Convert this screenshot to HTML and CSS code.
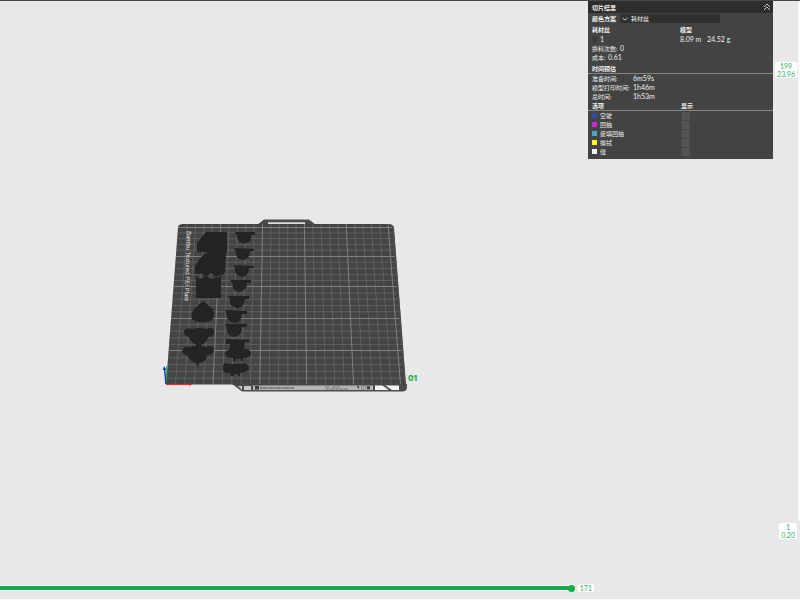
FILE: index.html
```html
<!DOCTYPE html>
<html lang="zh-CN">
<head>
<meta charset="utf-8">
<title>切片预览</title>
<link rel="stylesheet" href="styles.css">
</head>
<body>
<main class="viewport">
  <svg class="scene" viewBox="160 215 265 180" role="img" aria-label="打印板 01">
    <defs>
      <clipPath id="plate-clip"><path d="M183 224H389Q393 224 394 228L406 384H166L178 228Q178 224 183 224Z"/></clipPath>
    </defs>
    <path d="M257 225L264 219.5H309L316 225Z" fill="#4b4d4c"/>
    <path d="M268 222.3H305V224H268Z" fill="#dedede"/>
    <path d="M232 384H407V387Q407 391.5 402 391.5H242Z" fill="#4b4d4c"/>
    <path d="M238 386H242V390Z M244 386H251V390H244Z" fill="#c8c8c8"/>
    <path d="M253 385.5H373V390H253Z" fill="#b4b5b5"/>
    <path d="M375 385.5H399V390H375Z" fill="#f4f4f4"/>
    <path d="M382 384L391 390.5" stroke="#4b4d4c" stroke-width="1.8"/>
    <path d="M255 386H259V389.5H255Z M357 386.2H359.5L358.2 389.3Z M367 386.2H370V389.3H367Z" fill="#3b3d3c"/>
    <path d="M361.5 386.5H365.5V389.3H361.5Z" fill="none" stroke="#666" stroke-width=".5"/>
    <path d="M260 388H294" stroke="#666" stroke-width="1.3" stroke-dasharray="2 .5 3 .4 1 .5"/>
    <path d="M325 387H330M332 387H340M326 389H348" stroke="#666" stroke-width=".9" stroke-dasharray="2 .5"/>
    <path d="M183 224H389Q393 224 394 228L406 384.5H166L178 228Q178 224 183 224Z" fill="#434544"/>
    <g clip-path="url(#plate-clip)" fill="none">
      <path stroke="#646665" stroke-width=".8" d="M187.4 224L175.4 385M195.7 224L184.8 385M204.1 224L194.1 385M212.4 224L203.5 385M229.2 224L222.3 385M237.5 224L231.7 385M245.9 224L241 385M254.2 224L250.4 385M271 224L269.2 385M279.3 224L278.6 385M287.7 224L287.9 385M296 224L297.3 385M312.8 224L316.1 385M321.1 224L325.5 385M329.5 224L334.8 385M337.8 224L344.2 385M354.6 224L363 385M362.9 224L372.4 385M371.3 224L381.7 385M379.6 224L391.1 385"/>
      <path stroke="#646665" stroke-width=".8" d="M166 378.2H406M166 371.4H406M166 364.6H406M166 357.8H406M166 344.4H406M166 337.8H406M166 331.2H406M166 324.6H406M166 311.8H406M166 305.5H406M166 299.2H406M166 293H406M166 280.6H406M166 274.4H406M166 268.3H406M166 262.1H406M166 250.2H406M166 244.4H406M166 238.6H406M166 232.8H406"/>
      <path stroke="#858786" stroke-width=".9" d="M220.8 224L212.9 385M262.6 224L259.8 385M304.4 224L306.7 385M346.2 224L353.6 385M388 224L400.5 385M166 350.5H406M166 318.5H406M166 286.5H406M166 256.5H406M166 227.5H406"/>
      <path stroke="#4b4d4c" stroke-width="1.5" d="M393 226L405 384"/>
    </g>
    <text class="plate-name" transform="translate(187 231) rotate(92)">Bambu Textured PEI Plate</text>
    <g fill="#232424">
      <path d="M206 232H227V252H197V243Z"/>
      <path d="M209 251.5H226L225 271Q225 275 220 275L216 277L211 273L206 277L202 274H195V266L201 257Z"/>
      <path d="M196 276L200 279L206 276L212 279L221 276V298H196Z"/>
      <path d="M203 301L213 309Q215 314 213 319Q209 323 203 322Q196 323 192 319Q191 313 194 309Z"/>
      <path d="M184 331Q187 327 192 329Q199 327 206 329Q214 326 214 332Q214 337 208 337Q207 344 199 345Q191 344 189 337Q183 336 184 331Z"/>
      <path d="M196 343H201V348H196Z"/>
      <path d="M182 351Q184 345 190 347Q198 344 206 347Q214 344 214 350Q213 355 207 355Q207 362 199 363L198 366H197L196 363Q189 361 188 356Q183 355 182 351Z"/>
      <path d="M235 232H255V235H251Q252 242 244 243.5Q237 242 237 236Z"/>
      <path d="M234 248L254 249V251H250Q250 259 243 260Q235 259 236 252Z"/>
      <path d="M234 265L254 266V268H249Q249 276 242 277Q234 275 235 269Z"/>
      <path d="M230 280H251V283H247Q247 291 239 292Q231 290 233 284Z"/>
      <path d="M228 296H249V299H245Q244 308 237 308Q229 306 230 300Z"/>
      <path d="M225 310L247 311V314H242Q241 323 234 323Q226 321 227 315Z"/>
      <path d="M225 324H247V327H242Q242 336 234 337Q226 335 227 328Z"/>
      <path d="M226 339L249 340V342H245L244 349Q251 349 251 354Q250 358 243 358V361H241V359H236V361H233V358Q225 358 225 354Q226 350 229 350L230 344H226Z"/>
      <path d="M223 365Q225 362 230 364H240Q248 362 249 368Q249 372 240 373V376H238V374H234V376H231V373Q222 373 223 369Z"/>
    </g>
    <path d="M166 384L167 366" stroke="#26a95a" stroke-width="1.4"/>
    <path d="M166 384L164.5 369" stroke="#1725b5" stroke-width="1.3"/>
    <path d="M162.8 370L164.2 366L166.2 370Z" fill="#1725b5"/>
    <path d="M166 384.5H190" stroke="#e22c2e" stroke-width="1.2"/>
    <path d="M189 383.2L193 384.5L189 385.7Z" fill="#e22c2e"/>
    <text class="plate-index" x="408" y="381">01</text>
  </svg>

  <section class="results" aria-labelledby="results-title">
    <header class="results-head">
      <h1 id="results-title">切片结果</h1>
      <button class="collapse" type="button" aria-label="收起">
        <svg viewBox="0 0 8 8"><path d="M1 4L4 1L7 4M1 7L4 4L7 7"/></svg>
      </button>
    </header>
    <div class="scheme">
      <label for="scheme">颜色方案</label>
      <span class="picker">
        <svg viewBox="0 0 6 4"><path d="M.5 1L3 3L5.5 1"/></svg>
        <select id="scheme"><option>耗材丝</option></select>
      </span>
    </div>
    <table class="filament">
      <colgroup><col class="col-name"><col class="col-length"><col></colgroup>
      <thead><tr><th>耗材丝</th><th colspan="2">模型</th></tr></thead>
      <tbody><tr><td><i class="swatch black"></i>1</td><td>8.09 m</td><td>24.52 g</td></tr></tbody>
    </table>
    <p>换料次数: <b>0</b></p>
    <p>成本: <b>0.61</b></p>
    <h2>时间预估</h2>
    <dl class="times">
      <dt>准备时间:</dt><dd>6m59s</dd>
      <dt>模型打印时间:</dt><dd>1h46m</dd>
      <dt>总时间:</dt><dd>1h53m</dd>
    </dl>
    <h2 class="columns"><span>选项</span><span>显示</span></h2>
    <ul class="options">
      <li><label for="travel"><i class="swatch blue"></i>空驶</label><input id="travel" type="checkbox"></li>
      <li><label for="retract"><i class="swatch magenta"></i>回抽</label><input id="retract" type="checkbox"></li>
      <li><label for="unretract"><i class="swatch cyan"></i>装填回抽</label><input id="unretract" type="checkbox"></li>
      <li><label for="wipe"><i class="swatch yellow"></i>擦拭</label><input id="wipe" type="checkbox"></li>
      <li><label for="seam"><i class="swatch white"></i>缝</label><input id="seam" type="checkbox"></li>
    </ul>
  </section>

  <div class="layers">
    <output class="tag" for="layer">199<br>23.96</output>
    <output class="tag" for="layer">1<br>0.20</output>
    <input id="layer" class="layer-range" type="range" min="1" max="199" value="199" aria-label="层">
  </div>

  <div class="moves">
    <input id="move" class="move-range" type="range" min="0" max="171" value="171" aria-label="步骤">
    <output class="tag" for="move">171</output>
  </div>
</main>
</body>
</html>
```
FILE: styles.css
```css
* {
  box-sizing: border-box;
}

body {
  margin: 0;
  background: #e8e8e8;
  color: #f0f0f0;
  font: 6px/9px Lato, "Noto Sans CJK SC", sans-serif;
}

h1, h2, p, dl, dd, ul {
  margin: 0;
  padding: 0;
  font-size: inherit;
}

.viewport {
  position: relative;
  display: grid;
  grid-template-columns: 1fr 185px 27px;
  grid-template-rows: 1fr 22px;
  min-height: 100vh;
  border-top: 1px solid #484848;
  border-bottom: 1px solid #fafafa;
  overflow: hidden;
}

/* Plate on the free 3D canvas */
.scene {
  position: absolute;
  left: 160px;
  top: 214px;
  width: 265px;
  height: 180px;
}

.plate-name {
  font: 6px "Liberation Sans", sans-serif;
  fill: #e4e6e5;
}

.plate-index {
  font: 800 8px Inter, sans-serif;
  fill: #1fac55;
}

.results {
  grid-column: 2;
  align-self: start;
  padding-bottom: 3px;
  background: #434343;
  white-space: nowrap;
}

.results-head {
  display: flex;
  justify-content: space-between;
  align-items: center;
  height: 12px;
  padding: 0 2px 0 4px;
  background: #2d2d2d;
}

.collapse {
  width: 8px;
  height: 8px;
  padding: 0;
  border: 0;
  background: none;
}

svg {
  display: block;
}

.collapse path,
.picker path {
  fill: none;
  stroke: #c8c8c8;
}

.scheme {
  display: flex;
  align-items: center;
  height: 11px;
  padding-left: 4px;
  font-weight: bold;
}

.picker {
  display: flex;
  align-items: center;
  gap: 3px;
  width: 100px;
  height: 9px;
  margin-left: 4px;
  padding-left: 2px;
  background: #303030;
}

.picker svg {
  width: 6px;
  height: 4px;
}

.picker select {
  flex: 1;
  height: 9px;
  padding: 0;
  border: 0;
  appearance: none;
  background: none;
  color: inherit;
  font: 6px/9px Lato, "Noto Sans CJK SC", sans-serif;
}

.filament {
  width: 100%;
  border-collapse: collapse;
  table-layout: fixed;
}

.filament th,
.filament td {
  padding: 0;
  height: 10px;
  text-align: left;
}

.col-name {
  width: 92px;
}

.col-length {
  width: 27px;
}

.filament td,
.times dd,
.results b {
  font-size: 7px;
  font-weight: normal;
}

.results b {
  margin-left: 1px;
  line-height: 1;
}

.filament th:first-child,
.filament td:first-child,
.results p {
  padding-left: 4px;
}

.results p {
  height: 9px;
}

.results h2 {
  height: 12px;
  padding: 2px 4px 0;
  border-bottom: 1px solid #858585;
}

.times {
  display: grid;
  grid-template-columns: 41px 1fr;
  padding-left: 4px;
}

.columns,
.options li {
  display: grid;
  grid-template-columns: 89px 1fr;
  align-items: center;
}

.results .columns {
  height: 10px;
  padding-top: 0;
}

.options {
  list-style: none;
}

.options li {
  height: 9px;
  padding-left: 4px;
}

.options label {
  display: flex;
  align-items: center;
}

.swatch {
  display: inline-block;
  width: 5px;
  height: 5px;
  margin-right: 3px;
}

.black { background: #383838; }
.blue { background: #304ca0; }
.magenta { background: #c52bd0; }
.cyan { background: #4ba8c5; }
.yellow { background: #f8f820; }
.white { background: #f4f4f4; }

.options input {
  width: 8px;
  height: 8px;
  margin: 0 0 0 1px;
  appearance: none;
  background: #535353;
}

.tag {
  padding: 0 2px;
  border-radius: 2px;
  background: #fff;
  color: #2bb263;
  font-size: 7px;
  line-height: 8px;
  text-align: center;
}

.layers {
  grid-column: 3;
  position: relative;
  display: flex;
  flex-direction: column;
  justify-content: space-between;
  align-items: flex-end;
  padding: 61px 3px 38px 0;
}

.layer-range {
  position: absolute;
  top: 0;
  right: 0;
  bottom: 56px;
  width: 2px;
  margin: 0;
  appearance: none;
  writing-mode: vertical-lr;
  direction: rtl;
  background: #fafafa;
}

.layer-range::-webkit-slider-thumb {
  appearance: none;
  width: 2px;
  height: 2px;
}

.moves {
  grid-column: 1 / -1;
  grid-row: 2;
  display: flex;
  align-items: center;
  gap: 3px;
  width: 74.25%;
}

.move-range {
  flex: 1;
  height: 8px;
  margin: 0;
  appearance: none;
  background: linear-gradient(#f8f8f8 1px, #17a94d 1px 5px, #f8f8f8 5px) left center / calc(100% - 3px) 6px no-repeat;
}

.move-range::-webkit-slider-thumb {
  appearance: none;
  width: 7px;
  height: 7px;
  border-radius: 50%;
  background: #17a94d;
}
```
